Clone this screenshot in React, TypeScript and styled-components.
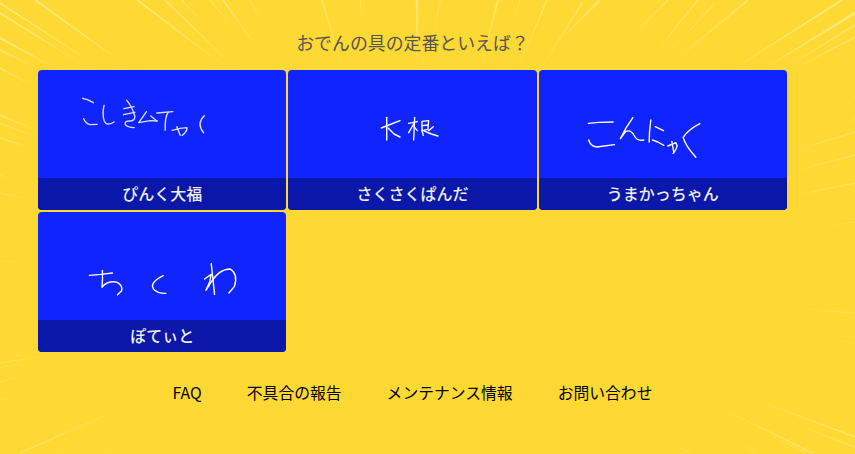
import styled, { createGlobalStyle } from "styled-components";

const Global = createGlobalStyle`
  html, body {
    margin: 0;
    padding: 0;
    height: 100%;
    overflow: hidden;
    background: #ffd933;
  }
`;

const Page = styled.div`
  position: relative;
  width: 855px;
  height: 454px;
  overflow: hidden;
  font-family: "Noto Sans CJK JP", "Noto Sans", sans-serif;
`;

const Rays = styled.svg`
  position: absolute;
  inset: 0;
  width: 855px;
  height: 454px;
`;

const Main = styled.main`
  position: relative;
  width: 749px;
  margin-left: 38px;
  padding-top: 29px;
`;

const Question = styled.h1`
  margin: 0 0 14px;
  height: 27px;
  line-height: 27px;
  font-size: 17.9px;
  font-weight: 400;
  text-align: center;
  color: #555;
`;

const Grid = styled.div`
  display: grid;
  grid-template-columns: repeat(3, 1fr);
  gap: 2px;
`;

const Card = styled.div`
  display: flex;
  flex-direction: column;
  height: 140px;
  border-radius: 4px;
  overflow: hidden;
  background: #1024ff;
`;

const Sketch = styled.svg`
  display: block;
  width: 100%;
  height: 108px;
  fill: none;
  stroke: #fff;
  stroke-width: 4.2;
  stroke-linecap: round;
  stroke-linejoin: round;
  opacity: ${(p: { $soft?: boolean }) => (p.$soft ? 0.85 : 1)};
`;

const Caption = styled.div`
  height: 32px;
  line-height: 30px;
  background: #0a17a8;
  color: #eee;
  font-size: 16px;
  font-weight: 500;
  text-align: center;
`;

const Footer = styled.nav`
  display: flex;
  justify-content: center;
  gap: 45px;
  margin-top: 29px;
`;

const FooterLink = styled.a`
  font-size: 15.8px;
  line-height: 24px;
  color: #000;
  text-decoration: none;
`;

type Answer = {
  name: string;
  viewBox: string;
  soft?: boolean;
  strokes: string[];
};

// strokes are traced in 3x coordinates of the card's region, hence the viewBox offsets
const answers: Answer[] = [
  {
    name: "ぴんく大福",
    viewBox: "24 30 744 324",
    soft: true,
    strokes: [
      "M158 115 L172 119 L190 128",
      "M161 176 Q166 190 180 194 L201 193",
      "M222 136 Q216 160 222 182 Q230 200 252 186",
      "M281 146 L312 140",
      "M280 164 L314 157",
      "M290 121 Q306 140 314 168 Q316 182 300 183 Q284 182 285 193 Q292 202 312 203",
      "M349 155 L326 188 L360 182 L381 183",
      "M362 168 L380 183",
      "M380 159 L428 155",
      "M414 157 Q404 170 405 211",
      "M426 211 L450 205 L470 203 Q472 214 456 226",
      "M440 200 L450 226",
      "M522 167 Q498 190 520 218",
    ],
  },
  {
    name: "さくさくぱんだ",
    viewBox: "9 30 747 324",
    strokes: [
      "M290 204 L320 192 L346 182",
      "M306 172 L306 240",
      "M310 204 L328 222 L346 231",
      "M372 190 L398 185",
      "M390 172 L387 240",
      "M387 192 L372 218",
      "M388 200 L398 212",
      "M412 184 L432 182 L430 208 L412 212 L412 184",
      "M413 197 L430 195",
      "M412 212 L416 226",
      "M416 212 L440 222 L460 228",
      "M446 200 L432 212",
    ],
  },
  {
    name: "うまかっちゃん",
    viewBox: "12 30 744 324",
    strokes: [
      "M160 190 L190 187 L234 186",
      "M161 240 Q165 258 185 261 L238 254",
      "M293 173 L272 205 L256 236 L272 214 Q288 208 298 228 Q306 244 326 240",
      "M347 180 Q342 215 342 246",
      "M360 200 L385 212",
      "M352 240 L368 246 L386 256",
      "M398 258 L422 248 L426 258 L420 272 L414 280",
      "M410 244 L416 278",
      "M494 191 Q460 208 444 232 Q450 256 482 292",
    ],
  },
  {
    name: "ぽてぃと",
    viewBox: "24 21 744 324",
    strokes: [
      "M178 211 L212 208 L247 204",
      "M217 196 Q218 225 216 246",
      "M216 246 Q235 225 262 232 Q280 244 274 258 L262 269",
      "M399 212 Q352 236 374 256 Q386 266 407 265",
      "M543 176 Q548 220 553 268",
      "M523 222 L543 208 L538 232 L527 256 L541 234 Q566 192 600 192 Q625 208 612 245 L596 264",
    ],
  },
];

const footerLinks = ["FAQ", "不具合の報告", "メンテナンス情報", "お問い合わせ"];

// x1, y1 (thick end), x2, y2 (tip), half width, opacity
type Ray = [number, number, number, number, number, number];

const rays: Ray[] = [
  // top left
  [35, 0, 130, 68, 1, 0.75], [0, 3, 100, 68, 0.9, 0.7], [0, 13, 88, 68, 0.9, 0.7],
  [0, 38, 55, 68, 1, 0.7], [0, 50, 37, 68, 0.7, 0.6], [0, 68, 37, 88, 0.7, 0.6],
  [137, 0, 227, 68, 0.9, 0.65], [165, 0, 235, 68, 0.9, 0.5], [182, 0, 203, 23, 0.7, 0.4],
  [210, 0, 233, 28, 0.7, 0.4], [223, 0, 257, 47, 0.9, 0.5], [250, 0, 263, 23, 0.7, 0.35],
  // left
  [0, 115, 35, 130, 0.8, 0.6], [0, 123, 35, 137, 0.7, 0.5], [0, 138, 35, 149, 0.7, 0.45],
  [0, 175, 10, 178, 0.5, 0.3], [0, 193, 37, 200, 0.6, 0.4], [0, 262, 37, 260, 0.5, 0.25],
  // bottom left
  [0, 363, 50, 355, 0.7, 0.35], [0, 368, 23, 363, 0.6, 0.3], [0, 382, 33, 372, 0.6, 0.35],
  [0, 400, 13, 397, 0.5, 0.3], [20, 453, 122, 408, 0.8, 0.45], [57, 453, 73, 445, 0.5, 0.25],
  [103, 453, 117, 447, 0.5, 0.25],
  // top
  [322, 0, 343, 70, 1, 0.45], [360, 0, 363, 23, 0.7, 0.4], [417, 0, 417, 70, 1.2, 0.6],
  [440, 0, 435, 33, 0.8, 0.4], [498, 0, 480, 70, 1, 0.5], [520, 0, 513, 20, 0.7, 0.35],
  [547, 0, 517, 70, 0.8, 0.45],
  // top right
  [600, 0, 555, 45, 1.1, 0.55], [582, 3, 540, 70, 0.8, 0.5], [668, 0, 628, 40, 0.8, 0.4],
  [698, 0, 652, 57, 0.8, 0.45], [715, 3, 665, 57, 0.7, 0.35], [748, 0, 672, 63, 0.9, 0.5],
  [842, 0, 732, 70, 1.1, 0.65], [855, 13, 762, 70, 1.6, 0.65], [855, 25, 782, 70, 0.9, 0.55],
  [855, 37, 792, 70, 0.8, 0.5],
  // right
  [855, 97, 845, 102, 0.5, 0.25], [855, 118, 838, 128, 0.5, 0.25], [855, 132, 787, 153, 0.8, 0.45],
  [855, 155, 787, 173, 0.8, 0.45], [855, 183, 787, 197, 0.8, 0.4], [855, 222, 822, 227, 0.5, 0.3],
  [855, 313, 793, 308, 0.6, 0.35], [855, 343, 833, 340, 0.5, 0.25],
  // bottom right
  [855, 437, 743, 395, 0.9, 0.5], [855, 447, 777, 417, 0.7, 0.35], [813, 453, 710, 403, 0.8, 0.45],
  [807, 453, 760, 430, 0.7, 0.35], [690, 453, 657, 435, 0.6, 0.25], [757, 453, 727, 437, 0.6, 0.25],
];

function rayPoints([x1, y1, x2, y2, w]: Ray) {
  const len = Math.hypot(x2 - x1, y2 - y1);
  const nx = (-(y2 - y1) / len) * w;
  const ny = ((x2 - x1) / len) * w;
  return `${x1 + nx},${y1 + ny} ${x1 - nx},${y1 - ny} ${x2},${y2}`;
}

export default function App() {
  return (
    <Page>
      <Global />
      <Rays viewBox="0 0 855 454">
        {rays.map((r) => (
          <polygon key={r.join("-")} points={rayPoints(r)} fill="#ffeea0" opacity={r[5]} />
        ))}
      </Rays>
      <Main>
        <Question>おでんの具の定番といえば？</Question>
        <Grid>
          {answers.map((a) => (
            <Card key={a.name}>
              <Sketch viewBox={a.viewBox} preserveAspectRatio="none" $soft={a.soft}>
                {a.strokes.map((d) => (
                  <path key={d} d={d} />
                ))}
              </Sketch>
              <Caption>{a.name}</Caption>
            </Card>
          ))}
        </Grid>
        <Footer>
          {footerLinks.map((l) => (
            <FooterLink key={l} href="#">
              {l}
            </FooterLink>
          ))}
        </Footer>
      </Main>
    </Page>
  );
}
